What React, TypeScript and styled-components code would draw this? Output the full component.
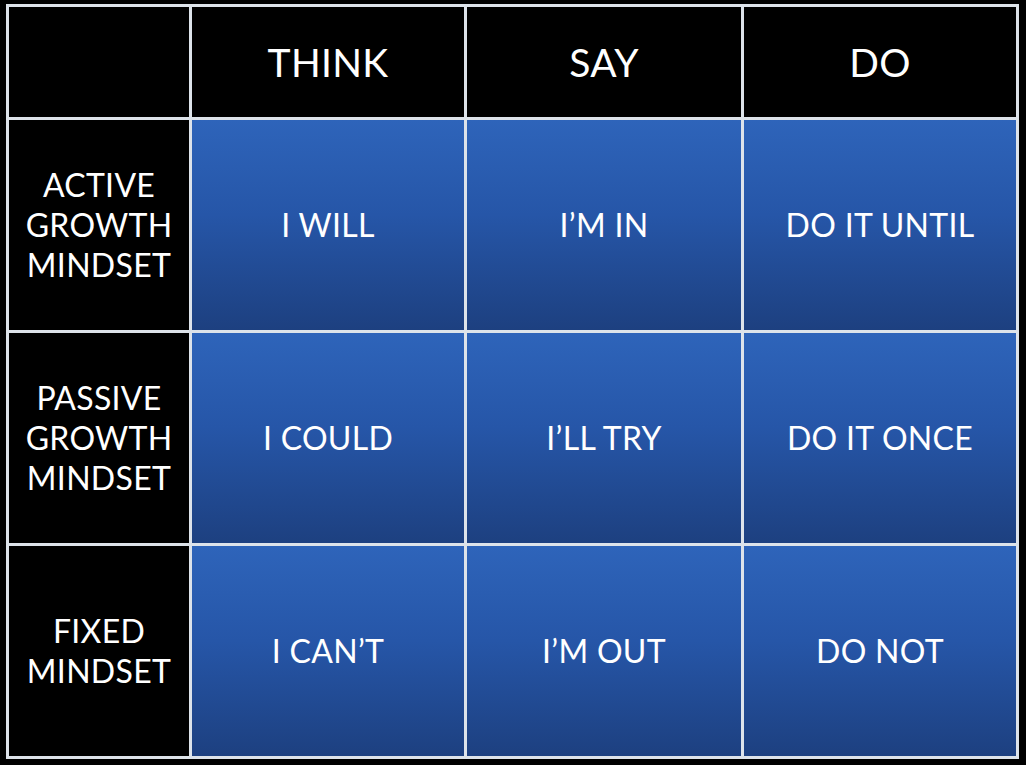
import styled, { createGlobalStyle } from 'styled-components';

const GlobalStyle = createGlobalStyle`
  html, body {
    margin: 0;
    padding: 0;
    background: #000;
  }
`;

const Page = styled.div`
  width: 1026px;
  height: 765px;
  background: #000;
  padding: 4px 0 0 6px;
  box-sizing: border-box;
`;

const Grid = styled.div`
  display: grid;
  grid-template-columns: 180px 272px 274px 272px;
  grid-template-rows: 110px 210px 210px 210px;
  gap: 3px;
  padding: 3px;
  width: max-content;
  background: #dde3ea;
  font-family: Lato, "Liberation Sans", sans-serif;
  color: #fff;
`;

const Cell = styled.div<{ $kind: 'head' | 'label' | 'body' }>`
  display: flex;
  align-items: center;
  justify-content: center;
  text-align: center;
  background: ${(p) =>
    p.$kind === 'body'
      ? 'linear-gradient(to bottom, #2e64ba 0%, #2656a8 45%, #1d4080 100%)'
      : '#000'};
  font-size: ${(p) => (p.$kind === 'head' ? '39px' : '32px')};
  line-height: ${(p) => (p.$kind === 'label' ? '40px' : '1')};
  letter-spacing: 0.3px;
`;

const columns = ['THINK', 'SAY', 'DO'];

const rows = [
  { label: ['ACTIVE', 'GROWTH', 'MINDSET'], cells: ['I WILL', 'I’M IN', 'DO IT UNTIL'] },
  { label: ['PASSIVE', 'GROWTH', 'MINDSET'], cells: ['I COULD', 'I’LL TRY', 'DO IT ONCE'] },
  { label: ['FIXED', 'MINDSET'], cells: ['I CAN’T', 'I’M OUT', 'DO NOT'] },
];

export default function App() {
  return (
    <Page>
      <GlobalStyle />
      <Grid>
        <Cell $kind="head" />
        {columns.map((c) => (
          <Cell key={c} $kind="head">{c}</Cell>
        ))}
        {rows.map((r) => (
          <>
            <Cell key={r.label.join()} $kind="label">
              <div>
                {r.label.map((l) => (
                  <div key={l}>{l}</div>
                ))}
              </div>
            </Cell>
            {r.cells.map((c) => (
              <Cell key={c} $kind="body">{c}</Cell>
            ))}
          </>
        ))}
      </Grid>
    </Page>
  );
}
